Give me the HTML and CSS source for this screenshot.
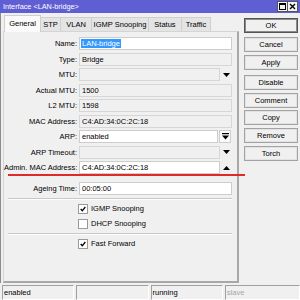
FILE: index.html
```html
<!DOCTYPE html>
<html lang="en">
<head>
  <meta charset="UTF-8" />
  <title>Interface &lt;LAN-bridge&gt;</title>
  <link rel="stylesheet" href="styles.css">
</head>
<body>
  <div class="window">
    <div class="titlebar">
      <span class="title">Interface &lt;LAN-bridge&gt;</span>
      <div class="winbtns">
        <span class="winbtn">
          <svg width="7" height="7" viewBox="0 0 7 7"><rect x="0.5" y="0.5" width="6" height="6" fill="none" stroke="#000"/><line x1="0" y1="1.5" x2="7" y2="1.5" stroke="#000"/></svg>
        </span>
        <span class="winbtn">
          <svg width="7" height="7" viewBox="0 0 7 7"><path d="M1 1 L6 6 M6 1 L1 6" stroke="#000" stroke-width="1.4"/></svg>
        </span>
      </div>
    </div>

    <div class="body">
      <div class="left">
        <div class="tabs">
          <span class="tab active">General</span>
          <span class="tab">STP</span>
          <span class="tab">VLAN</span>
          <span class="tab">IGMP Snooping</span>
          <span class="tab">Status</span>
          <span class="tab">Traffic</span>
        </div>
        <div class="panel">
          <div class="row">
            <label>Name:</label>
            <div class="field white"><span class="sel">LAN-bridge</span></div>
          </div>
          <div class="row">
            <label>Type:</label>
            <div class="field">Bridge</div>
          </div>
          <div class="row">
            <label>MTU:</label>
            <div class="field"></div>
            <span class="arrow">
              <svg width="7" height="4" viewBox="0 0 7 4"><path d="M0 0 H7 L3.5 4 Z" fill="#000"/></svg>
            </span>
          </div>
          <div class="row">
            <label>Actual MTU:</label>
            <div class="field">1500</div>
          </div>
          <div class="row">
            <label>L2 MTU:</label>
            <div class="field">1598</div>
          </div>
          <div class="row">
            <label>MAC Address:</label>
            <div class="field">C4:AD:34:0C:2C:18</div>
          </div>
          <div class="row">
            <label>ARP:</label>
            <div class="field white">enabled</div>
            <span class="arrow boxed">
              <svg width="7" height="7" viewBox="0 0 7 7"><rect x="0" y="0" width="7" height="1.2" fill="#000"/><path d="M0 2.5 H7 L3.5 6.5 Z" fill="#000"/></svg>
            </span>
          </div>
          <div class="row">
            <label>ARP Timeout:</label>
            <div class="field"></div>
            <span class="arrow">
              <svg width="7" height="4" viewBox="0 0 7 4"><path d="M0 0 H7 L3.5 4 Z" fill="#000"/></svg>
            </span>
          </div>
          <div class="row admin">
            <label>Admin. MAC Address:</label>
            <div class="field white">C4:AD:34:0C:2C:18</div>
            <span class="arrow">
              <svg width="7" height="4" viewBox="0 0 7 4"><path d="M0 4 H7 L3.5 0 Z" fill="#000"/></svg>
            </span>
          </div>
          <div class="row">
            <label>Ageing Time:</label>
            <div class="field white">00:05:00</div>
          </div>

          <div class="sep"></div>

          <div class="check">
            <span class="box">
              <svg width="6" height="6" viewBox="0 0 6 6"><path d="M0.7 3 L2.3 4.8 L5.3 1" fill="none" stroke="#000" stroke-width="1.3"/></svg>
            </span>
            IGMP Snooping
          </div>
          <div class="check">
            <span class="box"></span>
            DHCP Snooping
          </div>

          <div class="sep"></div>

          <div class="check">
            <span class="box">
              <svg width="6" height="6" viewBox="0 0 6 6"><path d="M0.7 3 L2.3 4.8 L5.3 1" fill="none" stroke="#000" stroke-width="1.3"/></svg>
            </span>
            Fast Forward
          </div>
        </div>
      </div>

      <div class="actions">
        <button class="default">OK</button>
        <button>Cancel</button>
        <button>Apply</button>
        <button class="gap">Disable</button>
        <button>Comment</button>
        <button>Copy</button>
        <button>Remove</button>
        <button>Torch</button>
      </div>
    </div>

    <div class="statusbar">
      <span class="cell">enabled</span>
      <span class="cell"></span>
      <span class="cell">running</span>
      <span class="cell muted">slave</span>
    </div>

    <div class="mark"></div>
  </div>
</body>
</html>
```

FILE: styles.css
```css
body {
  margin: 0;
  font-family: "Liberation Sans", Arial, sans-serif;
  font-size: 7.5px;
  color: #000;
  background-color: #f0f0f0;
}
.window {
  position: relative;
  width: 300px;
  height: 300px;
  overflow: hidden;
  background-color: #f0f0f0;
}
.titlebar {
  height: 13px;
  background-color: #5f5fd3;
  color: white;
  display: flex;
  align-items: center;
  justify-content: space-between;
  padding-left: 3px;
}
.title {
  font-size: 7.3px;
}
.winbtns {
  display: flex;
  margin-right: 2px;
}
.winbtn {
  width: 9px;
  height: 9px;
  background-color: #f4f4f4;
  border: 1px solid #555;
  display: flex;
  align-items: center;
  justify-content: center;
  margin-left: -1px;
}
.body {
  display: flex;
  height: 272px;
}
.left {
  width: 236px;
  border-left: 1px solid #8c8c8c;
  display: flex;
  flex-direction: column;
  padding-left: 2px;
  height: 270px;
}
.tabs {
  height: 18px;
  display: flex;
  align-items: flex-end;
  padding-left: 1px;
}
.tab {
  height: 13px;
  line-height: 13px;
  text-align: center;
  background-color: #e4e4e4;
  border: 1px solid #cfcfcf;
  border-bottom: none;
  margin-right: -1px;
  white-space: nowrap;
}
.tab:nth-child(1) { width: 35px; }
.tab:nth-child(2) { width: 19px; }
.tab:nth-child(3) { width: 30px; }
.tab:nth-child(4) { width: 56px; }
.tab:nth-child(5) { width: 32px; }
.tab:nth-child(6) { width: 28px; }
.tab.active {
  height: 16px;
  line-height: 16px;
  background-color: #fafafa;
  position: relative;
  z-index: 1;
  margin-bottom: -1px;
}
.panel {
  flex: 1;
  border: 1px solid #d4d4d4;
  border-right: 2px solid #a8a8a8;
  border-bottom: 2px solid #a8a8a8;
  padding: 5px 5px 0 0;
}
.row {
  display: flex;
  align-items: center;
  height: 13px;
  margin-bottom: 2.5px;
}
.row label {
  width: 73px;
  text-align: right;
  margin-right: 2px;
  white-space: nowrap;
}
.field {
  flex: 1;
  height: 11px;
  line-height: 11px;
  border: 1px solid #d6d6d6;
  background-color: #f0f0f0;
  padding-left: 2px;
  white-space: nowrap;
}
.field.white {
  background-color: #fff;
  border-color: #cdcdcd;
}
.sel {
  background-color: #3399ff;
  color: white;
  padding: 0 1px;
  margin-left: -1px;
}
.arrow {
  width: 12px;
  height: 13px;
  display: flex;
  align-items: center;
  justify-content: center;
}
.arrow.boxed {
  width: 10px;
  height: 11px;
  margin-left: 1px;
  margin-right: 1px;
  border: 1px solid #cdcdcd;
  background-color: #fbfbfb;
}
.row.admin {
  margin-bottom: 8px;
}
.sep {
  height: 1px;
  background-color: #c8c8c8;
  border-bottom: 1px solid #fdfdfd;
  margin: 1px 0 3px 4px;
}
.check {
  height: 12px;
  display: flex;
  align-items: center;
  padding-left: 74px;
  margin-bottom: 3px;
}
.box {
  width: 8px;
  height: 8px;
  border: 1px solid #9a9a9a;
  background-color: #fff;
  margin-right: 3px;
  display: flex;
  align-items: center;
  justify-content: center;
}
.actions {
  display: flex;
  flex-direction: column;
  padding-top: 5px;
  margin-left: 5px;
}
button {
  width: 54px;
  height: 15px;
  margin-bottom: 2.6px;
  font-family: "Liberation Sans", Arial, sans-serif;
  font-size: 7.5px;
  color: #000;
  background-color: #f0f0f0;
  border: 1px solid #a2a2a2;
  box-shadow: inset 0 0 0 1px #e2e2e2;
  padding: 0;
}
button.default {
  border-color: #555;
  box-shadow: inset 0 0 0 1px #8a8a8a;
  margin-bottom: 4px;
}
button.gap {
  margin-top: 3px;
}
.statusbar {
  display: flex;
  gap: 2px;
  height: 15px;
  padding-left: 2px;
}
.cell {
  width: 70px;
  height: 13px;
  line-height: 13px;
  padding-left: 1px;
  border-top: 1px solid #a0a0a0;
  border-left: 1px solid #a0a0a0;
  border-right: 1px solid #fff;
  border-bottom: 1px solid #fff;
}
.cell:last-child {
  width: 73px;
}
.muted {
  color: #a6a6a6;
}
.mark {
  position: absolute;
  left: 8px;
  top: 174px;
  width: 237px;
  height: 2px;
  background-color: #e02a2a;
}
```
